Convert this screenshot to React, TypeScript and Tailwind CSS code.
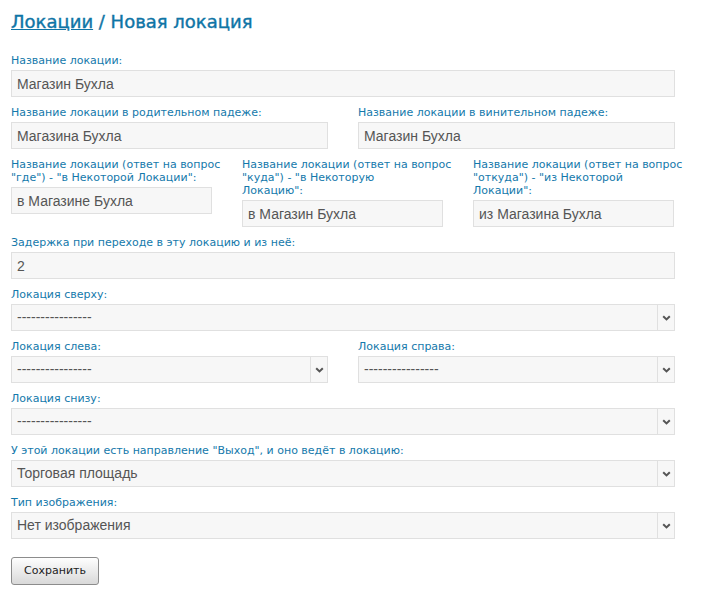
import React from 'react';

const LABEL = "block text-[11px] leading-[13px] text-[#1479ab] mb-[3px] font-['DejaVu_Sans',sans-serif]";
const FIELD = "block w-full h-[27px] border border-[#e0e0e0] bg-[#f7f7f7] px-[5px] text-[14px] text-[#555] font-['Liberation_Sans',Arial,sans-serif] outline-none";

const Chevron = () => (
  <svg width="9" height="6" viewBox="0 0 9 6" className="text-[#555]">
    <path d="M1.2 1.2 L4.5 4.4 L7.8 1.2" fill="none" stroke="currentColor" strokeWidth="2" />
  </svg>
);

const TextField = ({ label, value, labelClass = '' }: { label: React.ReactNode; value: string; labelClass?: string }) => (
  <div className="mb-[9px]">
    <label className={`${LABEL} ${labelClass}`}>{label}</label>
    <input className={FIELD} defaultValue={value} />
  </div>
);

const SelectField = ({ label, value }: { label: string; value: string }) => (
  <div className="mb-[9px]">
    <label className={LABEL}>{label}</label>
    <div className="relative">
      <select className={`${FIELD} appearance-none pr-[24px]`} defaultValue={value}>
        <option value={value}>{value}</option>
      </select>
      {/* arrow box */}
      <div className="pointer-events-none absolute right-px top-px bottom-px w-[17px] border-l border-[#e0e0e0] flex items-center justify-center">
        <Chevron />
      </div>
    </div>
  </div>
);

const DASH = '----------------';

const App: React.FC = () => {
  return (
    <div className="min-h-screen bg-white pl-[11px] pt-[11px] w-[675px]">
      <h1 className="text-[18px] leading-[22px] font-normal text-[#0f75a6] mb-[21px] font-['DejaVu_Sans',sans-serif] [-webkit-text-stroke:0.4px_#0f75a6]">
        <a href="#" className="underline">Локации</a> / Новая локация
      </h1>

      <TextField label="Название локации:" value="Магазин Бухла" />

      <div className="grid grid-cols-2 gap-x-[30px]">
        <TextField label="Название локации в родительном падеже:" value="Магазина Бухла" />
        <TextField label="Название локации в винительном падеже:" value="Магазин Бухла" />
      </div>

      <div className="grid grid-cols-[201px_201px_201px] gap-x-[30px] items-start">
        <TextField
          label={<>Название локации (ответ на вопрос<br />"где") - "в Некоторой Локации":</>}
          value="в Магазине Бухла"
          labelClass="whitespace-nowrap"
        />
        <TextField
          label={<>Название локации (ответ на вопрос<br />"куда") - "в Некоторую<br />Локацию":</>}
          value="в Магазин Бухла"
          labelClass="whitespace-nowrap"
        />
        <TextField
          label={<>Название локации (ответ на вопрос<br />"откуда") - "из Некоторой<br />Локации":</>}
          value="из Магазина Бухла"
          labelClass="whitespace-nowrap"
        />
      </div>

      <TextField label="Задержка при переходе в эту локацию и из неё:" value="2" />

      <SelectField label="Локация сверху:" value={DASH} />

      <div className="grid grid-cols-2 gap-x-[30px]">
        <SelectField label="Локация слева:" value={DASH} />
        <SelectField label="Локация справа:" value={DASH} />
      </div>

      <SelectField label="Локация снизу:" value={DASH} />
      <SelectField label={'У этой локации есть направление "Выход", и оно ведёт в локацию:'} value="Торговая площадь" />
      <SelectField label="Тип изображения:" value="Нет изображения" />

      <button className="mt-[9px] w-[88px] h-[28px] rounded-[3px] border border-[#8c8c8c] bg-gradient-to-b from-[#fefefe] to-[#d9d9d9] text-[11px] text-[#222] font-['DejaVu_Sans',sans-serif]">
        Сохранить
      </button>
    </div>
  );
};

export default App;
